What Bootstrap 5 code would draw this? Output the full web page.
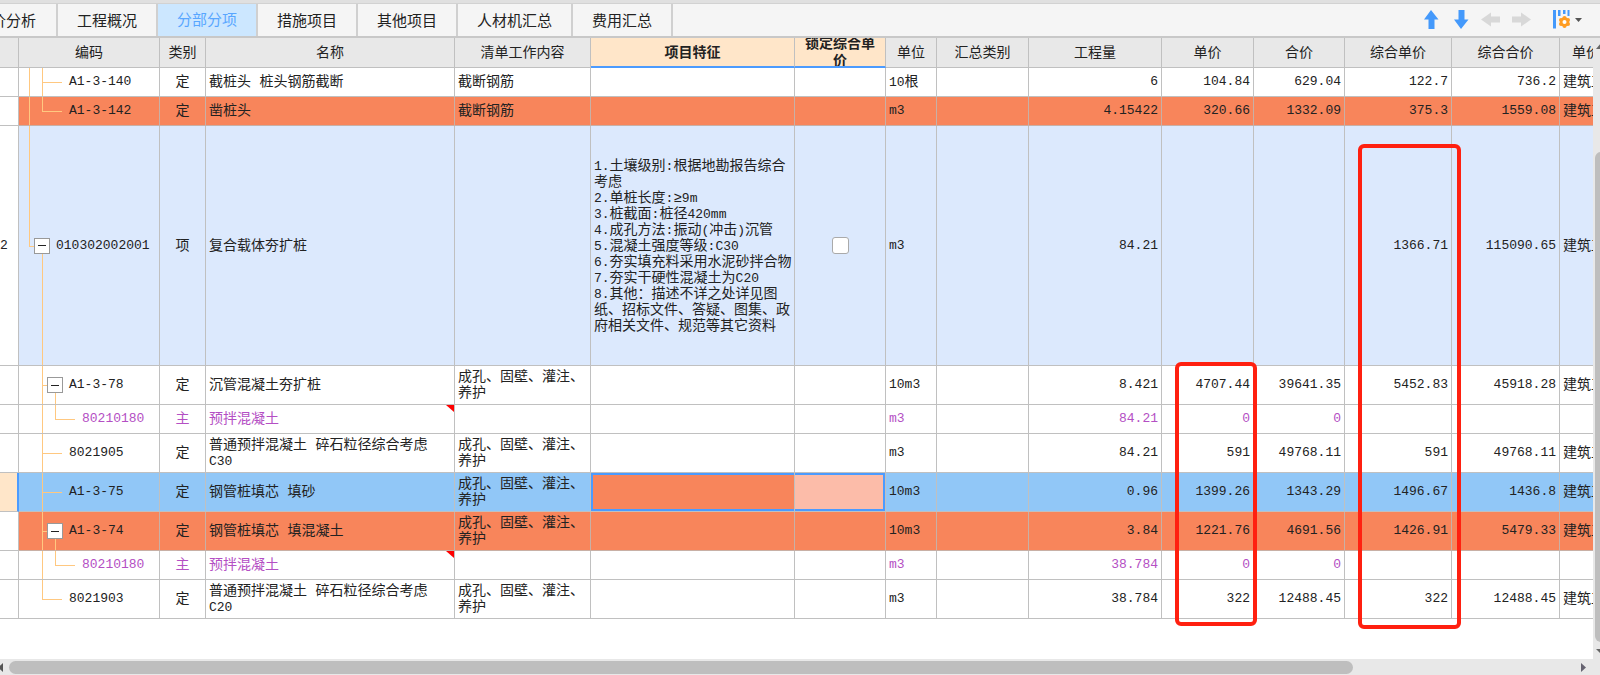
<!DOCTYPE html>
<html lang="zh-CN">
<head>
<meta charset="utf-8">
<meta name="viewport" content="width=device-width, initial-scale=1">
<title>分部分项</title>
<link href="https://cdn.jsdelivr.net/npm/bootstrap@5.3.0/dist/css/bootstrap.min.css" rel="stylesheet">
<style>
  body { font-family: "Liberation Sans", "Noto Sans CJK SC", sans-serif; color: #222; background: #fff; }
  .topline { height: 4px; background: #e0e0e0; border-bottom: 1px solid #d2d2d2; }
  .tabbar { height: 34px; background: #f5f5f5; border-bottom: 2px solid #c8c8c8; }
  .tab { width: 100px; height: 32px; padding: 2px 0 0; border: 0; border-right: 2px solid #d0d0d0; background: transparent; color: #222; font-size: 15px; line-height: 30px; white-space: nowrap; }
  .tab-cut { width: 58px; padding-right: 20px; overflow: hidden; }
  .tab-wide { width: 115px; }
  .tab.active { background: #cce7ff; color: #58a6ff; padding-top: 0; }
  .tool { padding: 0; border: 0; background: transparent; line-height: 0; }

  .sheet { table-layout: fixed; width: 100%; border-collapse: separate; border-spacing: 0; font-family: "Liberation Mono", "Noto Sans CJK SC", monospace; font-size: 14px; line-height: 16px; }
  .sheet th, .sheet td { padding: 0 3px; border: 0 solid #c0c0c0; border-width: 0 1px 1px 0; overflow: hidden; vertical-align: middle; }
  .sheet th { height: 30px; padding-bottom: 2px; background: #e8e8e8; font-weight: 400; text-align: center; font-family: "Liberation Sans", "Noto Sans CJK SC", sans-serif; }
  .sheet th.hot { padding-bottom: 0; background: #ffe6c9; font-weight: 700; border-bottom: 2px solid #4b9bff; }
  .sheet th.hot div { height: 28px; line-height: 17px; overflow: hidden; }
  .sheet td { height: 39px; }
  .sheet .short td { height: 29px; }
  .sheet .tall td { height: 240px; }
  .sheet .w-clip { white-space: nowrap; }
  .sheet th:last-child, .sheet td:last-child { border-right: 0; white-space: nowrap; padding-right: 0; }
  .sheet td.code { padding: 0 0 0 4px; }
  .num { text-align: right; font-size: 13px; }
  .lat { font-size: 13px; }
  span.lat { line-height: 1; }
  .orange td:not(:first-child) { background: #f8855b; border-color: #c8b0a6; }
  .pale td:not(:first-child) { background: #dce9fd; }
  .blue td:not(:first-child) { background: #91c7f7; }
  .blue td:first-child { background: #ffe6c9; border-right: 2px solid #4b9bff; }
  .sheet .blue td.sel-a { background: #f8855b; box-shadow: inset 2px 2px #4b9bff, inset 0 -2px #4b9bff; }
  .sheet .blue td.sel-b { background: #fcbca9; box-shadow: inset -2px -2px #4b9bff, inset 0 2px #4b9bff; }
  .sheet .violet td { color: #b44fc4; }
  .flag { position: relative; }
  .flag::after { content: ""; position: absolute; top: 0; right: 0; border-top: 7px solid red; border-left: 8px solid transparent; }

  /* tree guides */
  .tree { height: 100%; font-size: 13px; }
  .gd { position: relative; flex: 0 0 13px; align-self: stretch; display: flex; align-items: center; }
  .gd.v::before, .gd.end::before, .gd.down::before { content: ""; position: absolute; left: 6px; top: 0; bottom: -1px; width: 1px; background: #ffc880; }
  .gd.end::before { bottom: 50%; }
  .gd.down::before { top: 50%; }
  .gd.h::after, .gd.hs::after { content: ""; position: absolute; left: 6px; top: 50%; width: 20px; height: 1px; background: #ffc880; }
  .gd.hs::after { width: 6px; }
  .fold { position: relative; z-index: 1; flex: none; width: 16px; height: 16px; margin: 0 -2px; padding: 0 3px; border: 1px solid #999; background: #fff; display: flex; align-items: center; }
  .fold::before { content: ""; flex: 1; height: 1px; background: #222; }
  .tree .cd { margin-left: 7px; }

  .sheet .form-check-input { width: 17px; height: 17px; margin: 0; border: 1px solid #aaa; border-radius: 3px; vertical-align: middle; }
  .markbox { position: absolute; border: 4px solid #ff2010; border-radius: 6px; pointer-events: none; }
  .mark-a { top: 324px; right: 336px; width: 82px; height: 264px; }
  .mark-b { top: 106px; right: 132px; width: 103px; height: 485px; }
  .vbar { width: 7px; background: #e8e8e8; overflow: hidden; }
  .vbar .thumb { width: 13px; background: #bebebe; border-radius: 6px; margin: 98px 0 1px 2px; }
  .vbar svg, .hbar svg { flex: none; display: block; }
  .hbar { height: 16px; background: #e8e8e8; }
  .hbar .thumb { height: 13px; width: 84%; background: #bebebe; border-radius: 7px; }
</style>
</head>
<body class="vh-100 d-flex flex-column overflow-hidden">
<div class="topline flex-shrink-0"></div>
<nav class="tabbar d-flex flex-shrink-0">
  <button class="tab tab-cut d-flex justify-content-end">价分析</button>
  <button class="tab">工程概况</button>
  <button class="tab active">分部分项</button>
  <button class="tab">措施项目</button>
  <button class="tab">其他项目</button>
  <button class="tab tab-wide">人材机汇总</button>
  <button class="tab">费用汇总</button>
  <div class="ms-auto d-flex align-items-center">
    <button class="tool" aria-label="上移"><svg width="30" height="20" viewBox="0 0 30 20"><path d="M15 0l7.500 9.500H18.500v9.500h-6v-9.500H8z" fill="#4499fb"/></svg></button>
    <button class="tool" aria-label="下移"><svg width="30" height="20" viewBox="0 0 30 20"><path d="M15 19l7.500-9.500H18.500V0h-6v9.500H8z" fill="#4499fb"/></svg></button>
    <button class="tool" aria-label="左移"><svg width="30" height="20" viewBox="0 0 30 20"><path d="M5 9.500l10-7v4h9v6h-9v4z" fill="#d8d8d8"/></svg></button>
    <button class="tool" aria-label="右移"><svg width="30" height="20" viewBox="0 0 30 20"><path d="M25 9.500l-10-7v4H6v6h9v4z" fill="#d8d8d8"/></svg></button>
    <button class="tool ms-3 me-3" aria-label="列设置"><svg width="32" height="20" viewBox="0 0 32 20"><path d="M1 0h3v18.500H1zM6 0h2.500v6H6zM11 0h2.500v4H11zM15.500 0h2v6h-2z" fill="#4499fb"/><g fill="#ff9c22"><circle cx="12.500" cy="12" r="4.700"/><circle cx="12.500" cy="8" r="2"/><circle cx="12.500" cy="16" r="2"/><circle cx="9" cy="10" r="2"/><circle cx="16" cy="10" r="2"/><circle cx="9" cy="14" r="2"/><circle cx="16" cy="14" r="2"/></g><circle cx="12.500" cy="12" r="2" fill="#fff"/><path d="M23 8h7l-3.500 4z" fill="#555"/></svg></button>
  </div>
</nav>

<main class="d-flex flex-grow-1 overflow-hidden">
  <div class="position-relative flex-grow-1 overflow-hidden">
    <table class="sheet">
      <colgroup>
        <col style="width:19px"><col style="width:141px"><col style="width:46px"><col><col style="width:136px"><col style="width:204px"><col style="width:91px"><col style="width:51px"><col style="width:92px"><col style="width:133px"><col style="width:92px"><col style="width:91px"><col style="width:107px"><col style="width:108px"><col style="width:33px">
      </colgroup>
      <thead>
        <tr><th></th><th>编码</th><th>类别</th><th>名称</th><th>清单工作内容</th><th class="hot">项目特征</th><th class="hot"><div class="d-flex align-items-center justify-content-center"><span>锁定综合单<br>价</span></div></th><th>单位</th><th>汇总类别</th><th>工程量</th><th>单价</th><th>合价</th><th>综合单价</th><th>综合合价</th><th class="text-start ps-2 pe-0"><span class="ms-1">单价</span></th></tr>
      </thead>
      <tbody>
        <tr class="short"><td></td><td class="code"><div class="tree d-flex align-items-center"><i class="gd v"></i><i class="gd v h"></i><i class="gd"></i><span class="cd">A1-3-140</span></div></td><td class="text-center">定</td><td>截桩头 桩头钢筋截断</td><td>截断钢筋</td><td></td><td></td><td class="w-clip"><span class="lat">10</span>根</td><td></td><td class="num">6</td><td class="num">104.84</td><td class="num">629.04</td><td class="num">122.7</td><td class="num">736.2</td><td>建筑工</td></tr>
        <tr class="short orange"><td></td><td class="code"><div class="tree d-flex align-items-center"><i class="gd v"></i><i class="gd end h"></i><i class="gd"></i><span class="cd">A1-3-142</span></div></td><td class="text-center">定</td><td>凿桩头</td><td>截断钢筋</td><td></td><td></td><td class="lat">m3</td><td></td><td class="num">4.15422</td><td class="num">320.66</td><td class="num">1332.09</td><td class="num">375.3</td><td class="num">1559.08</td><td>建筑工</td></tr>
        <tr class="tall pale"><td class="lat px-0">2</td><td class="code"><div class="tree d-flex align-items-center"><i class="gd end hs"></i><i class="gd down"><button class="fold" aria-label="折叠"></button></i><span class="cd">010302002001</span></div></td><td class="text-center">项</td><td>复合载体夯扩桩</td><td></td><td class="w-clip"><span class="lat">1.</span>土壤级别<span class="lat">:</span>根据地勘报告综合<br>考虑<br><span class="lat">2.</span>单桩长度<span class="lat">:</span>≥<span class="lat">9m</span><br><span class="lat">3.</span>桩截面<span class="lat">:</span>桩径<span class="lat">420mm</span><br><span class="lat">4.</span>成孔方法<span class="lat">:</span>振动<span class="lat">(</span>冲击<span class="lat">)</span>沉管<br><span class="lat">5.</span>混凝土强度等级<span class="lat">:C30</span><br><span class="lat">6.</span>夯实填充料采用水泥砂拌合物<br><span class="lat">7.</span>夯实干硬性混凝土为<span class="lat">C20</span><br><span class="lat">8.</span>其他：描述不详之处详见图<br>纸、招标文件、答疑、图集、政<br>府相关文件、规范等其它资料</td><td class="text-center"><input class="form-check-input" type="checkbox" aria-label="锁定综合单价"></td><td class="lat">m3</td><td></td><td class="num">84.21</td><td></td><td></td><td class="num">1366.71</td><td class="num">115090.65</td><td>建筑工</td></tr>
        <tr><td></td><td class="code"><div class="tree d-flex align-items-center"><i class="gd"></i><i class="gd v hs"></i><i class="gd down"><button class="fold" aria-label="折叠"></button></i><span class="cd">A1-3-78</span></div></td><td class="text-center">定</td><td>沉管混凝土夯扩桩</td><td>成孔、固壁、灌注、养护</td><td></td><td></td><td class="lat">10m3</td><td></td><td class="num">8.421</td><td class="num">4707.44</td><td class="num">39641.35</td><td class="num">5452.83</td><td class="num">45918.28</td><td>建筑工</td></tr>
        <tr class="short violet"><td></td><td class="code"><div class="tree d-flex align-items-center"><i class="gd"></i><i class="gd v"></i><i class="gd end h"></i><i class="gd"></i><span class="cd">80210180</span></div></td><td class="text-center">主</td><td class="flag">预拌混凝土</td><td></td><td></td><td></td><td class="lat">m3</td><td></td><td class="num">84.21</td><td class="num">0</td><td class="num">0</td><td></td><td></td><td></td></tr>
        <tr><td></td><td class="code"><div class="tree d-flex align-items-center"><i class="gd"></i><i class="gd v h"></i><i class="gd"></i><span class="cd">8021905</span></div></td><td class="text-center">定</td><td>普通预拌混凝土 碎石粒径综合考虑<br><span class="lat">C30</span></td><td>成孔、固壁、灌注、养护</td><td></td><td></td><td class="lat">m3</td><td></td><td class="num">84.21</td><td class="num">591</td><td class="num">49768.11</td><td class="num">591</td><td class="num">49768.11</td><td>建筑工</td></tr>
        <tr class="blue"><td></td><td class="code"><div class="tree d-flex align-items-center"><i class="gd"></i><i class="gd v h"></i><i class="gd"></i><span class="cd">A1-3-75</span></div></td><td class="text-center">定</td><td>钢管桩填芯 填砂</td><td>成孔、固壁、灌注、养护</td><td class="sel-a"></td><td class="sel-b"></td><td class="lat">10m3</td><td></td><td class="num">0.96</td><td class="num">1399.26</td><td class="num">1343.29</td><td class="num">1496.67</td><td class="num">1436.8</td><td>建筑工</td></tr>
        <tr class="orange"><td></td><td class="code"><div class="tree d-flex align-items-center"><i class="gd"></i><i class="gd v hs"></i><i class="gd down"><button class="fold" aria-label="折叠"></button></i><span class="cd">A1-3-74</span></div></td><td class="text-center">定</td><td>钢管桩填芯 填混凝土</td><td>成孔、固壁、灌注、养护</td><td></td><td></td><td class="lat">10m3</td><td></td><td class="num">3.84</td><td class="num">1221.76</td><td class="num">4691.56</td><td class="num">1426.91</td><td class="num">5479.33</td><td>建筑工</td></tr>
        <tr class="short violet"><td></td><td class="code"><div class="tree d-flex align-items-center"><i class="gd"></i><i class="gd v"></i><i class="gd end h"></i><i class="gd"></i><span class="cd">80210180</span></div></td><td class="text-center">主</td><td class="flag">预拌混凝土</td><td></td><td></td><td></td><td class="lat">m3</td><td></td><td class="num">38.784</td><td class="num">0</td><td class="num">0</td><td></td><td></td><td></td></tr>
        <tr><td></td><td class="code"><div class="tree d-flex align-items-center"><i class="gd"></i><i class="gd end h"></i><i class="gd"></i><span class="cd">8021903</span></div></td><td class="text-center">定</td><td>普通预拌混凝土 碎石粒径综合考虑<br><span class="lat">C20</span></td><td>成孔、固壁、灌注、养护</td><td></td><td></td><td class="lat">m3</td><td></td><td class="num">38.784</td><td class="num">322</td><td class="num">12488.45</td><td class="num">322</td><td class="num">12488.45</td><td>建筑工</td></tr>
      </tbody>
    </table>
    <div class="markbox mark-a"></div>
    <div class="markbox mark-b"></div>
  </div>
  <div class="vbar d-flex flex-column flex-shrink-0">
    <svg width="13" height="16" viewBox="0 0 13 16"><path d="M3 11l5-6 5 6z" fill="#666"/></svg>
    <div class="thumb flex-grow-1"></div>
    <svg width="13" height="16" viewBox="0 0 13 16"><path d="M3 6l5 5 5-5z" fill="#666"/></svg>
  </div>
</main>
<div class="hbar d-flex align-items-center flex-shrink-0">
  <svg width="9" height="16" viewBox="0 0 9 16"><path d="M3 4v9L-2 8.500z" fill="#555"/></svg>
  <div class="thumb"></div>
  <svg class="ms-auto me-2" width="12" height="16" viewBox="0 0 12 16"><path d="M1 4v9l5-4.500z" fill="#666370"/></svg>
</div>
</body>
</html>
